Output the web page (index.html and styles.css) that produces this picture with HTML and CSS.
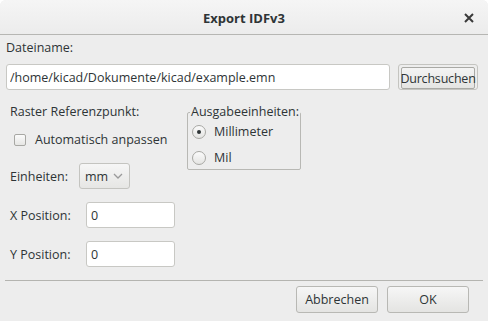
FILE: index.html
```html
<!DOCTYPE html>
<html lang="de">
<head>
  <meta charset="UTF-8">
  <title>Export IDFv3</title>
  <link rel="stylesheet" href="styles.css">
</head>
<body>
  <div class="window">
    <div class="titlebar">
      <span class="title">Export IDFv3</span>
      <span class="close">
        <svg width="10" height="10" viewBox="0 0 10 10"><path d="M1 1L9 9M9 1L1 9" stroke="#3a3a3a" stroke-width="2"/></svg>
      </span>
    </div>

    <div class="content">
      <div class="label">Dateiname:</div>
      <div class="file-row">
        <input class="field file-field" type="text" value="/home/kicad/Dokumente/kicad/example.emn">
        <button class="browse"><span>Durchsuchen</span></button>
      </div>

      <div class="options">
        <div class="left">
          <div class="label">Raster Referenzpunkt:</div>
          <label class="check-row"><span class="checkbox"></span>Automatisch anpassen</label>
          <div class="row units-row">
            <span class="row-label">Einheiten:</span>
            <span class="select">mm
              <svg width="10" height="6" viewBox="0 0 10 6"><path d="M1 1L5 5L9 1" fill="none" stroke="#9a9a9a" stroke-width="1.3"/></svg>
            </span>
          </div>
          <div class="row pos-row">
            <span class="row-label">X Position:</span>
            <input class="field small-field" type="text" value="0">
          </div>
          <div class="row pos-row">
            <span class="row-label">Y Position:</span>
            <input class="field small-field" type="text" value="0">
          </div>
        </div>

        <fieldset class="group">
          <legend>Ausgabeeinheiten:</legend>
          <label class="radio-row"><span class="radio checked"></span>Millimeter</label>
          <label class="radio-row"><span class="radio"></span>Mil</label>
        </fieldset>
      </div>
    </div>

    <div class="separator"></div>

    <div class="buttons">
      <button class="btn">Abbrechen</button>
      <button class="btn">OK</button>
    </div>
  </div>
</body>
</html>
```

FILE: styles.css
```css
body {
  margin: 0;
  background-color: #ffffff;
  font-family: 'Open Sans', 'Noto Sans', sans-serif;
  font-size: 12.5px;
  color: #2e3436;
}
.window {
  width: 488px;
  height: 321px;
  background-color: #ededed;
  border-radius: 6px 6px 0 0;
  overflow: hidden;
}
.titlebar {
  height: 34px;
  border-bottom: 1px solid #b6b6b3;
  background: linear-gradient(#f5f5f5, #ececec);
  display: flex;
  align-items: center;
  justify-content: center;
  position: relative;
}
.title {
  font-weight: 700;
  font-size: 13px;
  color: #2e3436;
  margin-top: 1px;
}
.close {
  position: absolute;
  right: 14px;
  top: 13px;
  line-height: 0;
}
.content {
  padding: 5px 6px 0 6px;
}
.label {
  line-height: 16px;
}
.file-row {
  display: flex;
  margin-top: 8px;
  gap: 8px;
}
.field {
  font-family: inherit;
  font-size: 12.5px;
  color: #2e3436;
  height: 26px;
  box-sizing: border-box;
  border: 1px solid #c8c8c4;
  border-radius: 3px;
  background: #ffffff;
  padding: 0 3px;
  margin: 0;
  outline: none;
}
.file-field {
  width: 384px;
}
.browse {
  width: 80px;
  height: 26px;
  padding: 2px;
  border: 1px solid #c4c4c0;
  border-radius: 3px;
  background: #ededed;
  font-family: inherit;
  font-size: 12.5px;
  letter-spacing: -0.2px;
  color: #2e3436;
}
.browse span {
  display: flex;
  align-items: center;
  justify-content: center;
  height: 100%;
  border: 1px solid #a9a9a5;
  border-radius: 2px;
  background: linear-gradient(#f4f4f4, #e4e4e2);
}
.options {
  display: flex;
  margin-top: 14px;
}
.left {
  width: 177px;
  padding-left: 4px;
  display: flex;
  flex-direction: column;
}
.check-row {
  display: flex;
  align-items: center;
  line-height: 16px;
  margin-top: 12px;
  padding-left: 4px;
}
.checkbox {
  width: 10px;
  height: 10px;
  border: 1px solid #a8a8a4;
  border-radius: 2px;
  background: linear-gradient(#fbfbfb, #e6e6e4);
  margin-right: 9px;
}
.row {
  display: flex;
  align-items: center;
  height: 26px;
}
.units-row {
  margin-top: 15px;
}
.pos-row {
  margin-top: 13px;
}
.units-row .row-label {
  width: 69px;
}
.pos-row .row-label {
  width: 76px;
}
.select {
  width: 51px;
  height: 26px;
  box-sizing: border-box;
  border: 1px solid #c4c4c0;
  border-radius: 3px;
  background: linear-gradient(#f6f6f6, #e6e6e4);
  display: flex;
  align-items: center;
  justify-content: space-between;
  padding: 0 6px 0 5px;
}
.small-field {
  width: 89px;
  padding-left: 4px;
}
.group {
  margin: 0;
  width: 113px;
  height: 66px;
  box-sizing: border-box;
  border: 1px solid #b8b8b4;
  border-radius: 2px;
  padding: 0 0 0 4px;
  align-self: flex-start;
}
.group legend {
  padding: 0 1px;
  margin-left: -2px;
  line-height: 16px;
}
.radio-row {
  display: flex;
  align-items: center;
  line-height: 16px;
  margin-top: 4px;
}
.radio-row + .radio-row {
  margin-top: 10px;
}
.radio {
  width: 12px;
  height: 12px;
  border: 1px solid #a8a8a4;
  border-radius: 50%;
  background: linear-gradient(#fbfbfb, #e4e4e2);
  margin-right: 8px;
  display: flex;
  align-items: center;
  justify-content: center;
}
.radio.checked::after {
  content: "";
  width: 4px;
  height: 4px;
  border-radius: 50%;
  background: #2e3436;
}
.separator {
  margin: 13px 5px 0 5px;
  height: 1px;
  background: #b4b4b0;
}
.buttons {
  display: flex;
  justify-content: flex-end;
  gap: 9px;
  padding: 5px 19px 0 0;
}
.btn {
  width: 82px;
  height: 27px;
  border: 1px solid #b8b8b4;
  border-radius: 3px;
  background: linear-gradient(#f6f6f6, #e4e4e2);
  font-family: inherit;
  font-size: 12.5px;
  color: #2e3436;
}
```
